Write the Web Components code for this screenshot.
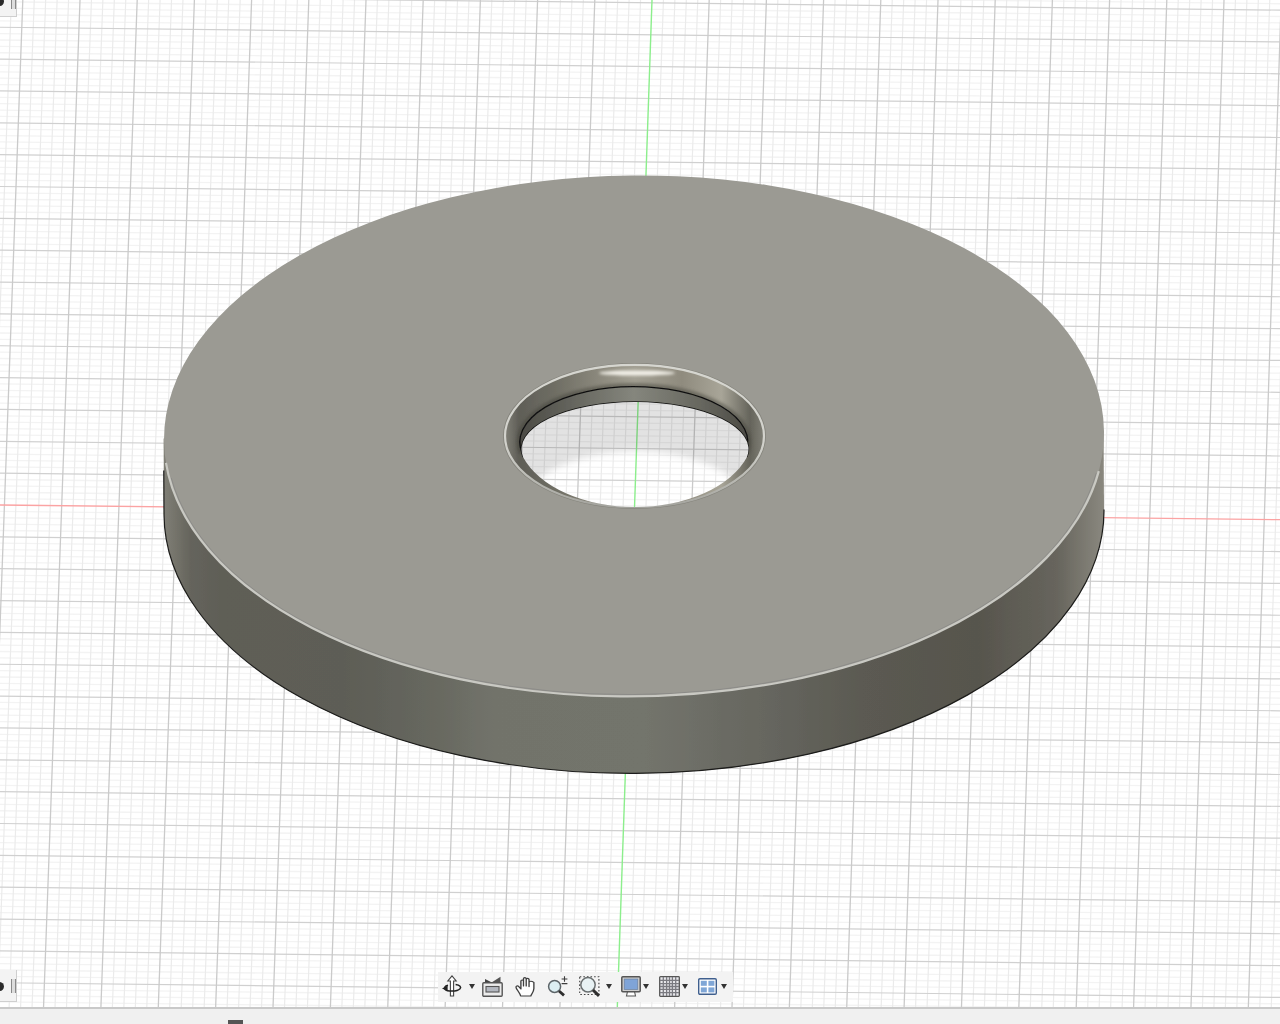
<!DOCTYPE html>
<html lang="en">
<head>
<meta charset="utf-8">
<title>CAD viewport</title>
<style>
html,body{margin:0;height:100%;overflow:hidden;background:#f0f0f0;font-family:"Liberation Sans",sans-serif}
</style>
</head>
<body>
<cad-app>
  <cad-scene slot="scene"></cad-scene>
  <panel-stub slot="overlay" data-pos="top"></panel-stub>
  <panel-stub slot="overlay" data-pos="bottom"></panel-stub>
  <nav-bar slot="overlay">
    <nav-icon name="orbit" caret></nav-icon>
    <nav-icon name="look"></nav-icon>
    <nav-icon name="hand"></nav-icon>
    <nav-icon name="zoom"></nav-icon>
    <nav-icon name="fit" caret></nav-icon>
    <nav-icon name="display" caret></nav-icon>
    <nav-icon name="grid" caret></nav-icon>
    <nav-icon name="views" caret></nav-icon>
  </nav-bar>
  <status-bar slot="status"></status-bar>
</cad-app>
<script>
class CadApp extends HTMLElement{
  constructor(){super();this.attachShadow({mode:'open'}).innerHTML=`
  <style>
    :host{display:flex;flex-direction:column;height:1024px;width:1280px}
    .view{position:relative;height:1007px;flex:none;overflow:hidden;background:#fff}
    .status{flex:1;display:flex;min-height:0}
    ::slotted(status-bar){flex:1}
  </style>
  <div class="view"><slot name="scene"></slot><slot name="overlay"></slot></div>
  <div class="status"><slot name="status"></slot></div>`;}
}
class CadScene extends HTMLElement{
  constructor(){
    super();
    let minV='',majV='',minH='',majH='';
    const H=1007,W=1280;
    for(let i=-70;i<=70;i++){
      const k=i/5;
      if(i===0)continue;
      const s=-0.0345+0.00017*k;
      const x=652+57.2*k;
      const seg=`M${x.toFixed(2)} 0L${(x+s*H).toFixed(2)} ${H}`;
      if(i%5===0)majV+=seg;else minV+=seg;
    }
    for(let i=-85;i<=85;i++){
      const j=i/5;
      if(i===0)continue;
      const y=505+31.85*j;
      const seg=`M0 ${y.toFixed(2)}L${W} ${(y+0.0115*W).toFixed(2)}`;
      if(i%5===0)majH+=seg;else minH+=seg;
    }
    this.attachShadow({mode:'open'}).innerHTML=`
  <style>
    :host{display:block;width:1280px;height:1007px}
    svg{display:block}
  </style>
  <svg width="1280" height="1007" viewBox="0 0 1280 1007" xmlns="http://www.w3.org/2000/svg">
    <defs>
      <filter id="soft" x="-5%" y="-5%" width="110%" height="110%"><feGaussianBlur stdDeviation="0.45"/></filter>
      <filter id="edge" x="-5%" y="-5%" width="110%" height="110%"><feGaussianBlur stdDeviation="0.4"/></filter>
      <filter id="b15" x="-30%" y="-200%" width="160%" height="500%"><feGaussianBlur stdDeviation="1.6"/></filter>
      <filter id="b5" x="-30%" y="-30%" width="160%" height="160%"><feGaussianBlur stdDeviation="3.5"/></filter>
      <linearGradient id="side" gradientUnits="userSpaceOnUse" x1="164" y1="0" x2="1104" y2="0">
        <stop offset="0" stop-color="#807f76"/>
        <stop offset=".028" stop-color="#65645c"/>
        <stop offset=".06" stop-color="#5f5e57"/>
        <stop offset=".19" stop-color="#5d5d56"/>
        <stop offset=".285" stop-color="#67685f"/>
        <stop offset=".35" stop-color="#72736b"/>
        <stop offset=".51" stop-color="#73746c"/>
        <stop offset=".64" stop-color="#66665f"/>
        <stop offset=".74" stop-color="#5b5a52"/>
        <stop offset=".865" stop-color="#57554d"/>
        <stop offset=".95" stop-color="#67655d"/>
        <stop offset="1" stop-color="#8a887f"/>
      </linearGradient>
      <linearGradient id="lip" gradientUnits="userSpaceOnUse" x1="503" y1="0" x2="766" y2="0">
        <stop offset="0" stop-color="#85847b"/>
        <stop offset=".06" stop-color="#5f5e57"/>
        <stop offset=".2" stop-color="#6f6e64"/>
        <stop offset=".38" stop-color="#8e8b7f"/>
        <stop offset=".5" stop-color="#a3a093"/>
        <stop offset=".68" stop-color="#8f8b7e"/>
        <stop offset=".83" stop-color="#a8a598"/>
        <stop offset=".94" stop-color="#65645b"/>
        <stop offset="1" stop-color="#85847b"/>
      </linearGradient>
      <linearGradient id="rim" gradientUnits="userSpaceOnUse" x1="0" y1="363" x2="0" y2="509">
        <stop offset="0" stop-color="#d6d6d0"/>
        <stop offset=".55" stop-color="#d2d2cc"/>
        <stop offset=".85" stop-color="#b4b4ae"/>
        <stop offset="1" stop-color="#a2a29c"/>
      </linearGradient>
      <linearGradient id="bore" gradientUnits="userSpaceOnUse" x1="520" y1="0" x2="748" y2="0">
        <stop offset="0" stop-color="#4c4b45"/>
        <stop offset=".18" stop-color="#5f5f58"/>
        <stop offset=".5" stop-color="#85867d"/>
        <stop offset=".8" stop-color="#66665e"/>
        <stop offset="1" stop-color="#4c4b45"/>
      </linearGradient>
      <clipPath id="through"><path d="M523 457A113.5 47.3 0 1 1 747 457A118 73 0 0 1 523 457Z"/></clipPath>
      <g id="lines" fill="none">
        <path d="${minH}" stroke="#f3f3f3" stroke-width="1.3"/>
        <path d="${minV}" stroke="#ebebeb" stroke-width="1.2"/>
        <path d="${majH}" stroke="#d0d0d0" stroke-width="1.2"/>
        <path d="${majV}" stroke="#cacaca" stroke-width="1.3"/>
        <path d="M0 505L1280 519.7" stroke="#fba3a3" stroke-width="1.3"/>
        <path d="M652 0L617.3 1007" stroke="#8cee8c" stroke-width="1.4"/>
      </g>
    </defs>

    <use href="#lines" filter="url(#soft)"/>

    <g filter="url(#edge)">
      <!-- body of the disc -->
      <g transform="rotate(-0.3 634 512)">
        <ellipse cx="634" cy="512" rx="470" ry="261.5" fill="url(#side)"/>
        <rect x="164" y="436" width="940" height="76" fill="url(#side)"/>
        <path d="M164 468V512A470 261.5 0 0 0 1104 512" fill="none" stroke="#1c1c1a" stroke-width="1.2"/>
      </g>
      <g transform="rotate(-0.6 634 436)">
        <ellipse cx="634" cy="436" rx="470" ry="260.5" fill="#9b9a93"/>
        <path d="M170.8 473A468 258.5 0 0 0 1095.8 478" fill="none" stroke="#78787a" stroke-width=".8" opacity=".55"/>
        <path d="M165.7 458A470 260.5 0 0 0 1098.4 476" fill="none" stroke="#c9c9c3" stroke-width="2.2"/>
      </g>
    </g>

    <!-- hole -->
    <g filter="url(#edge)">
      <ellipse cx="634.5" cy="436" rx="131.5" ry="73" fill="#85847c"/>
      <ellipse cx="634.5" cy="436" rx="129.5" ry="71.2" fill="url(#lip)" stroke="url(#rim)" stroke-width="2.2"/>
      <ellipse cx="637" cy="373" rx="38" ry="2.6" fill="#f2f0e8" filter="url(#b15)"/>
      <path d="M522 453A114 55.6 0 1 1 746 452" fill="none" stroke="#3d3c36" stroke-width="7" opacity=".45" filter="url(#b15)"/>
      <path d="M522 453A114 55.6 0 1 1 746 452L747 458L523 458Z" fill="url(#bore)"/>
      <path d="M522 453A114 55.6 0 1 1 746 452" fill="none" stroke="#111" stroke-width="1.3"/>
      <path d="M523 457A113.5 47.3 0 1 1 747 457" fill="none" stroke="#141412" stroke-width="1.4"/>
    </g>
    <g clip-path="url(#through)">
      <rect x="500" y="390" width="270" height="130" fill="#e2e2e2"/>
      <ellipse cx="636" cy="512" rx="116" ry="61" fill="#fff" filter="url(#b5)"/>
      <use href="#lines" filter="url(#soft)" style="mix-blend-mode:multiply"/>
    </g>
  </svg>`;
  }
}
class PanelStub extends HTMLElement{
  constructor(){super();this.attachShadow({mode:'open'}).innerHTML=`
  <style>
    :host{position:absolute;left:0;width:17px;background:#f3f3f3;border:solid #cfcfcf;border-width:0 1px 1px 0;box-sizing:border-box;overflow:hidden;display:block}
    :host([data-pos=top]){top:0;height:17px}
    :host([data-pos=bottom]){top:970px;height:32px}
    .glyph{position:absolute;left:-5px;width:9px;height:9px;border-radius:50%;background:#2a2a2a}
    :host([data-pos=top]) .glyph{top:-3px}
    :host([data-pos=bottom]) .glyph{top:12px}
    .grip{position:absolute;left:11px;width:3px;border:solid #8a8a8a;border-width:0 1px;background:#ddd}
    :host([data-pos=top]) .grip{top:0;height:9px}
    :host([data-pos=bottom]) .grip{top:9px;height:14px}
  </style>
  <div class="glyph"></div><div class="grip"></div>`;}
}
class NavBar extends HTMLElement{
  constructor(){super();this.attachShadow({mode:'open'}).innerHTML=`
  <style>
    :host{position:absolute;left:438px;top:972px;width:295px;height:30px;box-sizing:border-box;background:#f3f3f3;display:flex;align-items:center;padding:0 0 2px 4px;gap:0}
  </style>
  <slot></slot>`;}
}
const ICONS={
 orbit:{w:20,h:22,m:0,svg:`<path d="M10 .8L5.8 6H8.4V21H11.6V6H14.2Z" fill="#fff" stroke="#444" stroke-width="1.1"/>
   <path d="M6 10.2C2.5 11 2 13 3 14.2C5 16.6 15 17 18 13.8C19.6 12 18 10 13.6 9.4" fill="none" stroke="#222" stroke-width="1.5"/>
   <path d="M0 13.4L5.6 10.4V16Z" fill="#222"/>`},
 look:{w:21,h:21,m:7,svg:`<path d="M3 6.5V3L10 6.5Z" fill="#444"/><path d="M9.5 6.5L18.5 .8V6.5Z" fill="#555"/>
   <rect x=".8" y="6.8" width="19.4" height="13.4" rx="1" fill="#ececec" stroke="#555" stroke-width="1.4"/>
   <rect x="4" y="10.5" width="13" height="5.5" fill="#b4b8c0" stroke="#555" stroke-width="1.1"/>`},
 hand:{w:20,h:21,m:12,svg:`<path transform="scale(1.18 1)" d="M4.8 20C4.4 17.5 1.4 13.6 .9 11.6C.6 10 2.2 9.4 3.2 10.6L5 13V5.2C5 3.6 7 3.6 7.2 5.2V10V2.8C7.2 1.2 9.4 1.2 9.5 2.8V10V3.6C9.5 2 11.8 2 11.9 3.6V10.6V6.4C12 4.8 14.2 4.8 16 6.4V12.6C16 15.6 14 18 13.4 20Z" fill="#fff" stroke="#3f3f3f" stroke-width="1.15" stroke-linejoin="round"/>`},
 zoom:{w:21,h:20,m:12,svg:`<circle cx="7.6" cy="10.4" r="6" fill="#dceef2" stroke="#5c6468" stroke-width="1.5"/>
   <path d="M12 15L17 19.4" stroke="#2e2e2e" stroke-width="2.8"/>
   <path d="M14.6 3H20.4M17.5 .2V5.8M14.6 7.6H20.4" stroke="#3c3c3c" stroke-width="1.1" fill="none"/>`},
 fit:{w:21,h:21,m:11,caretGap:6,svg:`<rect x=".7" y=".7" width="19.2" height="17.8" fill="none" stroke="#444" stroke-width="1.1" stroke-dasharray="1.6 2"/>
   <circle cx="9" cy="8.8" r="7.2" fill="#e8f2f4" stroke="#6a6f70" stroke-width="1.5"/>
   <path d="M14 14L20 19.8" stroke="#2e2e2e" stroke-width="3"/>`},
 display:{w:20,h:21,m:9,caretGap:2,svg:`<path d="M6.5 15.5L5.5 20H14.5L13.5 15.5" fill="#fff" stroke="#555" stroke-width="1.1"/>
   <rect x=".8" y=".8" width="18.4" height="15" rx="1" fill="#cfcfcf" stroke="#555" stroke-width="1.5"/>
   <rect x="3.2" y="3" width="13.6" height="10.4" fill="#7fa4d8" stroke="#6a7f9c" stroke-width=".7"/>`},
 grid:{w:21,h:21,m:10,caretGap:2,svg:`<rect x=".7" y=".7" width="19.6" height="19.6" rx=".8" fill="#e9e9ec" stroke="#565656" stroke-width="1.3"/>
   <path d="M4.3 1V20M7.6 1V20M10.5 1V20M13.4 1V20M16.7 1V20M1 4.3H20M1 7.6H20M1 10.5H20M1 13.4H20M1 16.7H20" stroke="#7a7a80" stroke-width="1.3" fill="none"/>`},
 views:{w:19,h:17,m:10,caretGap:4,svg:`<rect x=".7" y=".7" width="17.6" height="15.6" rx="1.2" fill="#fff" stroke="#3f5f8e" stroke-width="1.4"/>
   <rect x="2.8" y="2.8" width="6" height="5" fill="#7fa6d6"/><rect x="10.4" y="2.8" width="6" height="5" fill="#7fa6d6"/>
   <rect x="2.8" y="9.4" width="6" height="5" fill="#7fa6d6"/><rect x="10.4" y="9.4" width="6" height="5" fill="#7fa6d6"/>`}
};
class NavIcon extends HTMLElement{
  constructor(){super();this.attachShadow({mode:'open'});}
  connectedCallback(){
    const c=ICONS[this.getAttribute('name')];
    const caret=this.hasAttribute('caret');
    const gap=c.caretGap===undefined?7:c.caretGap;
    this.shadowRoot.innerHTML=`
    <style>
      :host{display:flex;align-items:center;flex:none;margin-left:${c.m}px}
      svg{display:block;overflow:visible}
      .caret{width:0;height:0;border:solid transparent;border-width:5px 3.5px 0;border-top-color:#333;margin-left:${gap}px}
    </style>
    <svg width="${c.w}" height="${c.h}" viewBox="0 0 ${c.w} ${c.h}" xmlns="http://www.w3.org/2000/svg">${c.svg}</svg>
    ${caret?'<div class="caret"></div>':''}`;
  }
}
class StatusBar extends HTMLElement{
  constructor(){super();this.attachShadow({mode:'open'}).innerHTML=`
  <style>
    :host{display:flex;box-sizing:border-box;background:#f0f0f0;border-top:2px solid #c9c9c9;padding-left:228px;align-items:flex-end}
    .tick{width:15px;height:4px;background:#555}
  </style>
  <div class="tick"></div>`;}
}
customElements.define('cad-app',CadApp);
customElements.define('cad-scene',CadScene);
customElements.define('panel-stub',PanelStub);
customElements.define('nav-bar',NavBar);
customElements.define('nav-icon',NavIcon);
customElements.define('status-bar',StatusBar);
</script>
</body>
</html>
